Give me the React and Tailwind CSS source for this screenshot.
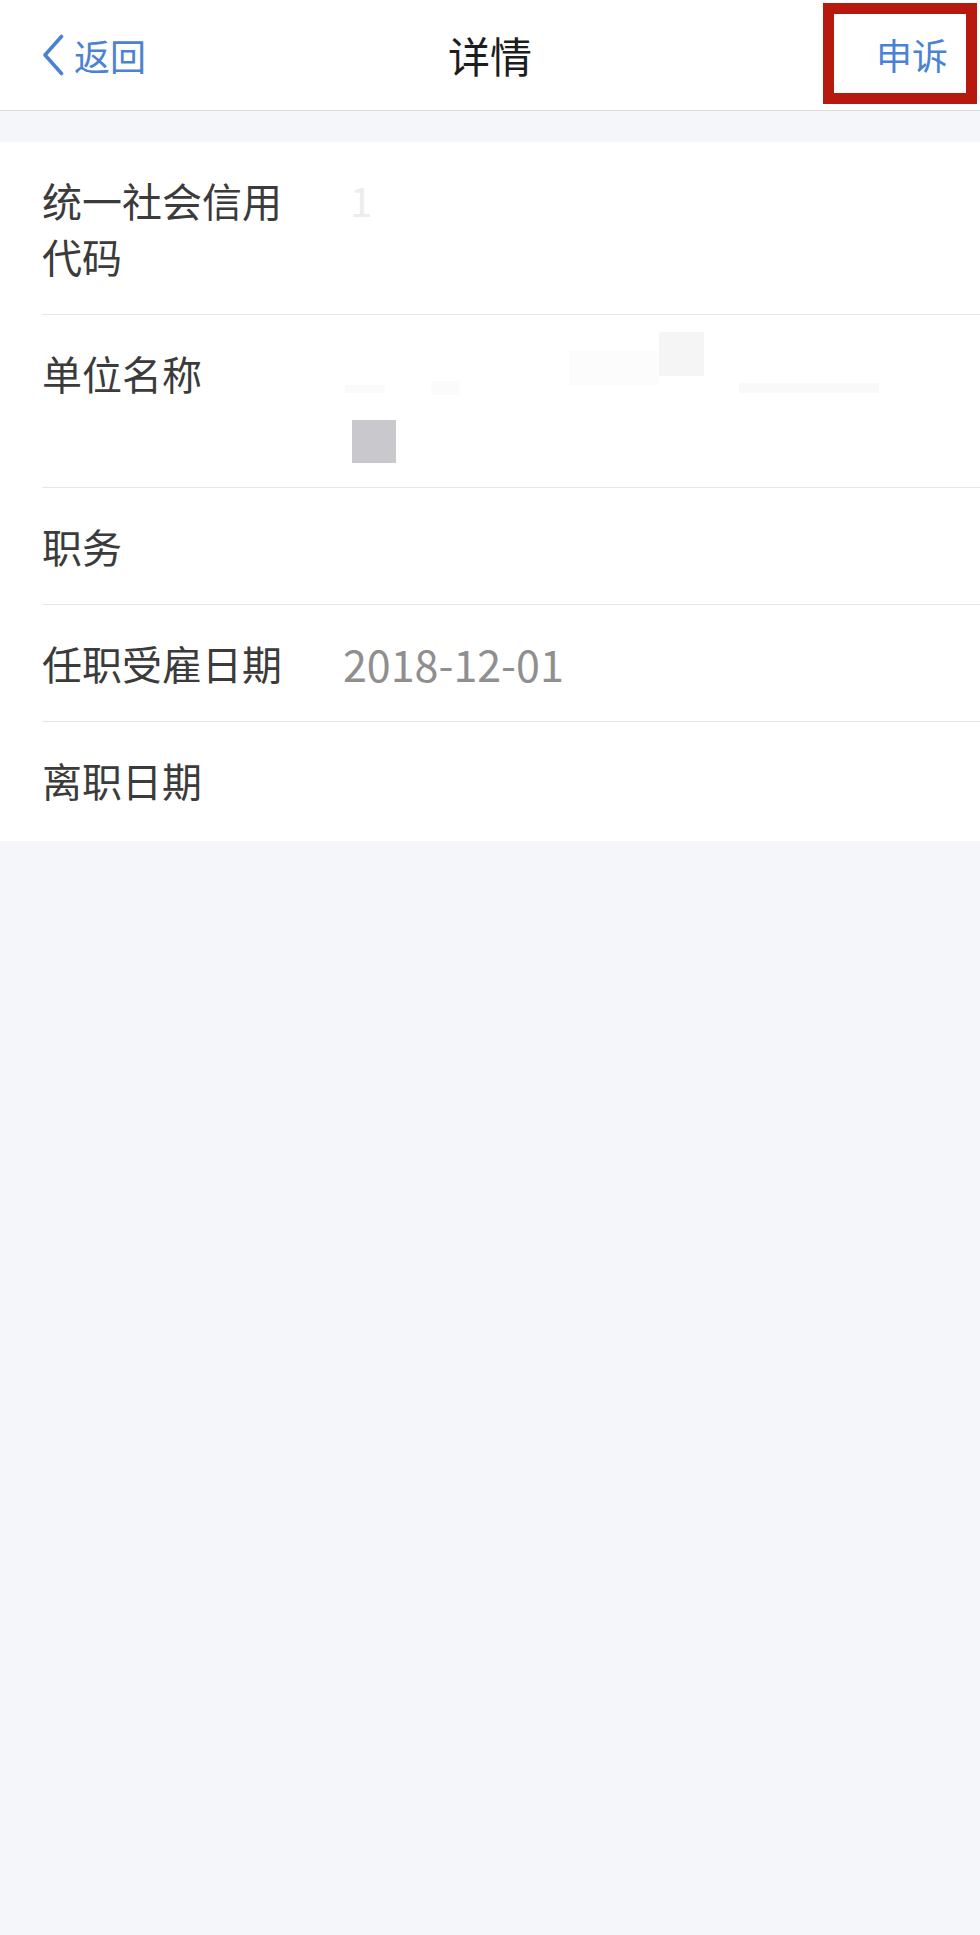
import React from "react";

function Row({ label, children, last }) {
  return (
    <div className="pl-[42px]">
      <div
        className={
          "grid grid-cols-[301px_1fr] py-[30px] " +
          (last ? "pb-[33px]" : "border-b border-[#e6e6e8]")
        }
      >
        <div className="max-w-[260px] text-[40px] leading-[56px] text-[#3b3b3b]">
          {label}
        </div>
        <div className="min-h-[56px] text-[40px] leading-[56px] text-[#8f8f8f]">{children}</div>
      </div>
    </div>
  );
}

export default function App() {
  return (
    <div className="h-[1935px] w-[980px] bg-[#f5f6fa] font-['Noto_Sans_CJK_SC',sans-serif]">
      {/* header */}
      <div className="grid h-[111px] grid-cols-[1fr_auto_1fr] items-center border-b border-[#dcdcdc] bg-white">
        <div className="flex items-center pl-[42px]">
          <svg width="22" height="42" viewBox="0 0 22 42" fill="none">
            <path
              d="M19.5 2.5 L3 21 L19.5 39.5"
              stroke="#4a83d3"
              strokeWidth="3.6"
              strokeLinecap="round"
              strokeLinejoin="round"
            />
          </svg>
          <span className="ml-[10px] text-[36px] leading-none text-[#4a83d3]">返回</span>
        </div>
        <div className="text-[42px] leading-none text-[#1d1d1d]">详情</div>
        <div className="flex justify-end self-start pr-[3px] pt-[3px]">
          <div className="flex h-[101px] w-[154px] items-center justify-end border-[11px] border-[#b8190f] pr-[18px]">
            <span className="text-[36px] leading-none text-[#4a83d3]">申诉</span>
          </div>
        </div>
      </div>

      {/* gap */}
      <div className="h-[31px]" />

      {/* detail list */}
      <div className="bg-white">
        <Row label="统一社会信用代码">
          <span className="pl-[7px] text-[#ececec]">1</span>
        </Row>
        <Row label="单位名称">
          <div className="relative flex h-[56px] items-start">
            <div className="ml-[2px] mt-[40px] h-[8px] w-[40px] bg-[#fafafa]" />
            <div className="ml-[46px] mt-[36px] h-[14px] w-[28px] bg-[#fbfbfb]" />
            <div className="ml-[110px] mt-[6px] h-[34px] w-[90px] bg-[#fcfcfc]" />
            <div className="-mt-[13px] h-[44px] w-[45px] bg-[#f5f5f5]" />
            <div className="ml-[35px] mt-[38px] h-[10px] w-[140px] bg-[#f9f9f9]" />
          </div>
          <div className="flex h-[56px] items-start">
            <div className="ml-[9px] mt-[19px] h-[43px] w-[44px] bg-[#c9c9cd]" />
          </div>
        </Row>
        <Row label="职务" />
        <Row label="任职受雇日期">
          <div className="flex h-[56px] items-center text-[43px] leading-none">2018-12-01</div>
        </Row>
        <Row label="离职日期" last />
      </div>
    </div>
  );
}
